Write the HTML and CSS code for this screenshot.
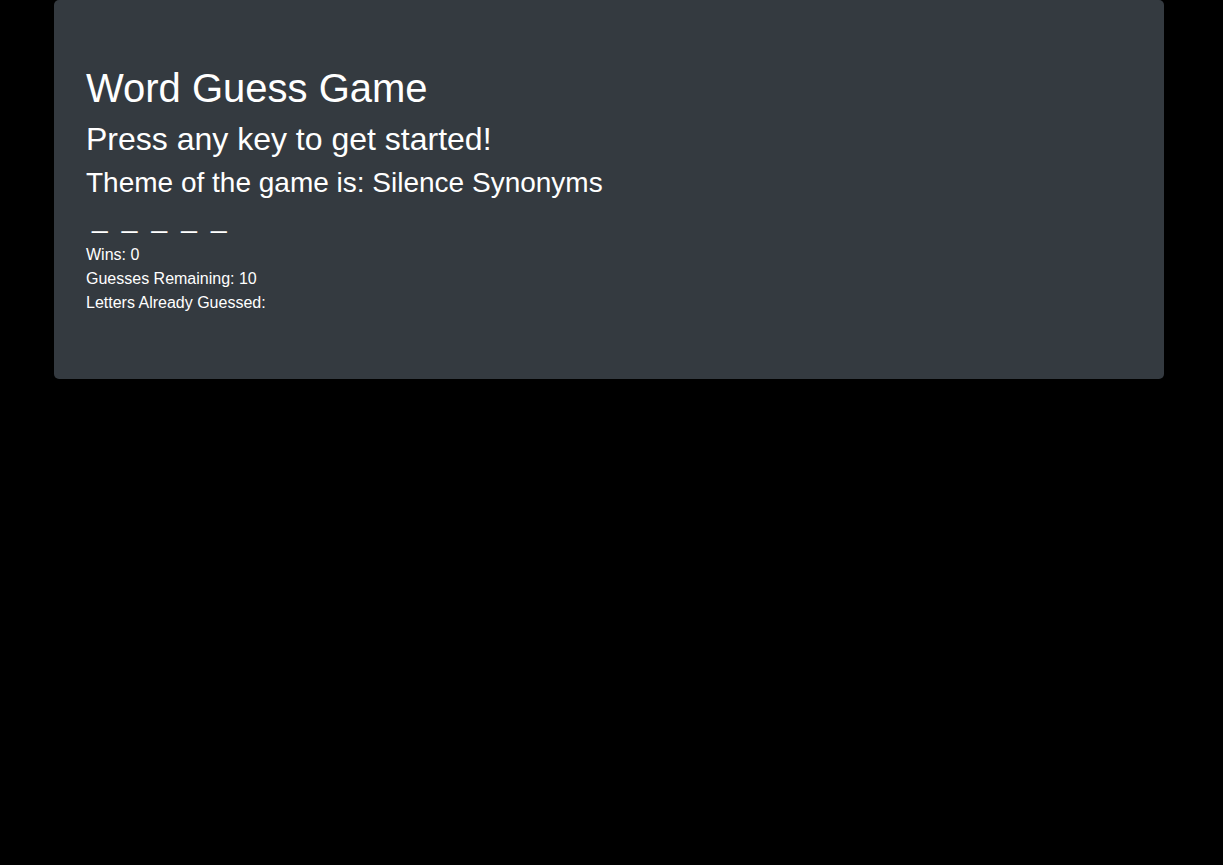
FILE: index.html
```html
<!DOCTYPE html>
<html lang="en">
<head>
<meta charset="utf-8">
<title>Word Guess Game</title>
<link rel="stylesheet" href="styles.css">
</head>
<body>
<div class="container">
  <div class="jumbotron">
    <h1 class="title">Word Guess Game</h1>
    <h2 class="subtitle">Press any key to get started!</h2>
    <h3 class="theme">Theme of the game is: Silence Synonyms</h3>
    <div class="blanks">_ _ _ _ _</div>
    <div class="stat">Wins: 0</div>
    <div class="stat">Guesses Remaining: 10</div>
    <div class="stat">Letters Already Guessed:</div>
  </div>
</div>
</body>
</html>
```
FILE: styles.css
```css
html, body {
  margin: 0;
  padding: 0;
  background: #000;
  color: #fff;
  font-family: "Liberation Sans", Arial, sans-serif;
}
.container {
  width: 1110px;
  margin-left: 54px;
}
.jumbotron {
  background: #343a40;
  border-radius: 5px;
  padding: 64px 32px;
}
.title, .subtitle, .theme {
  margin: 0 0 8px;
  font-weight: 400;
  line-height: 1.2;
}
.title { font-size: 40px; }
.subtitle { font-size: 32px; }
.theme { font-size: 28px; }
.blanks {
  font-size: 28px;
  line-height: 20px;
  height: 20px;
  margin-bottom: 15px;
  padding-left: 6px;
  word-spacing: 6.4px;
  white-space: pre;
}
.stat {
  font-size: 16px;
  line-height: 24px;
}
```
